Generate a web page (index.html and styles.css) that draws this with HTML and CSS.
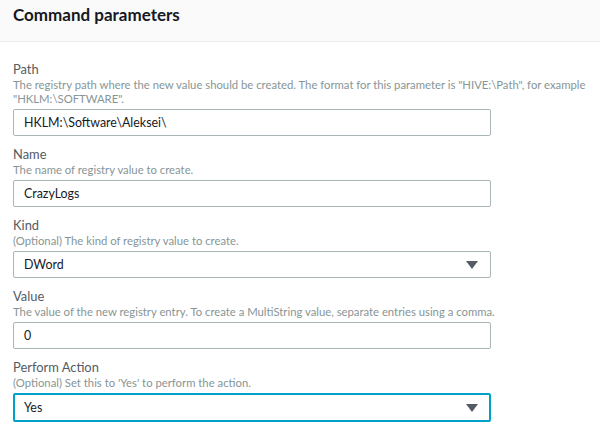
FILE: index.html
```html
<!DOCTYPE html>
<html>
<head>
<meta charset="utf-8">
<link rel="stylesheet" href="styles.css">
</head>
<body>
<div class="panel">
  <div class="header"><h2 class="title">Command parameters</h2></div>
  <div class="body">
    <div class="field">
      <div class="label">Path</div>
      <div class="desc">The registry path where the new value should be created. The format for this parameter is "HIVE:\Path", for example "HKLM:\SOFTWARE".</div>
      <div class="input">HKLM:\Software\Aleksei\</div>
    </div>
    <div class="field">
      <div class="label">Name</div>
      <div class="desc">The name of registry value to create.</div>
      <div class="input">CrazyLogs</div>
    </div>
    <div class="field">
      <div class="label">Kind</div>
      <div class="desc">(Optional) The kind of registry value to create.</div>
      <div class="input select">DWord<span class="arrow"></span></div>
    </div>
    <div class="field">
      <div class="label">Value</div>
      <div class="desc">The value of the new registry entry. To create a MultiString value, separate entries using a comma.</div>
      <div class="input">0</div>
    </div>
    <div class="field">
      <div class="label">Perform Action</div>
      <div class="desc">(Optional) Set this to 'Yes' to perform the action.</div>
      <div class="input select focus">Yes<span class="arrow"></span></div>
    </div>
  </div>
</div>
</body>
</html>
```
FILE: styles.css
```css
html, body { margin: 0; padding: 0; background: #fff; }
body { font-family: "Lato", "Open Sans", sans-serif; color: #16191f; }
.panel { width: 600px; }
.header {
  background: #fafafa;
  border-bottom: 1px solid #eaeded;
  height: 42px;
  box-sizing: border-box;
  padding: 0 13px;
}
.title {
  margin: 0;
  font-size: 17px;
  font-weight: 700;
  line-height: 30px;
  color: #16191f;
}
.body { padding: 18px 13px 0 13px; }
.field { margin-bottom: 9px; }
.label {
  font-size: 12.9px;
  line-height: 18px;
  color: #545b64;
}
.desc {
  font-size: 11.3px;
  line-height: 14px;
  color: #879596;
  margin-bottom: 3px;
}
.input {
  width: 478px;
  height: 27px;
  box-sizing: border-box;
  border: 1px solid #aab7b8;
  border-radius: 2px;
  padding: 0 10px;
  font-size: 12.4px;
  line-height: 25px;
  color: #16191f;
  position: relative;
}
.select .arrow {
  position: absolute;
  right: 12px;
  top: 9px;
  width: 0; height: 0;
  border-left: 6px solid transparent;
  border-right: 6px solid transparent;
  border-top: 8px solid #545b64;
}
.focus {
  border: 2px solid #00a1c9;
  height: 29px;
  padding: 0 9px;
}
.focus .arrow { right: 11px; top: 9px; }
```
